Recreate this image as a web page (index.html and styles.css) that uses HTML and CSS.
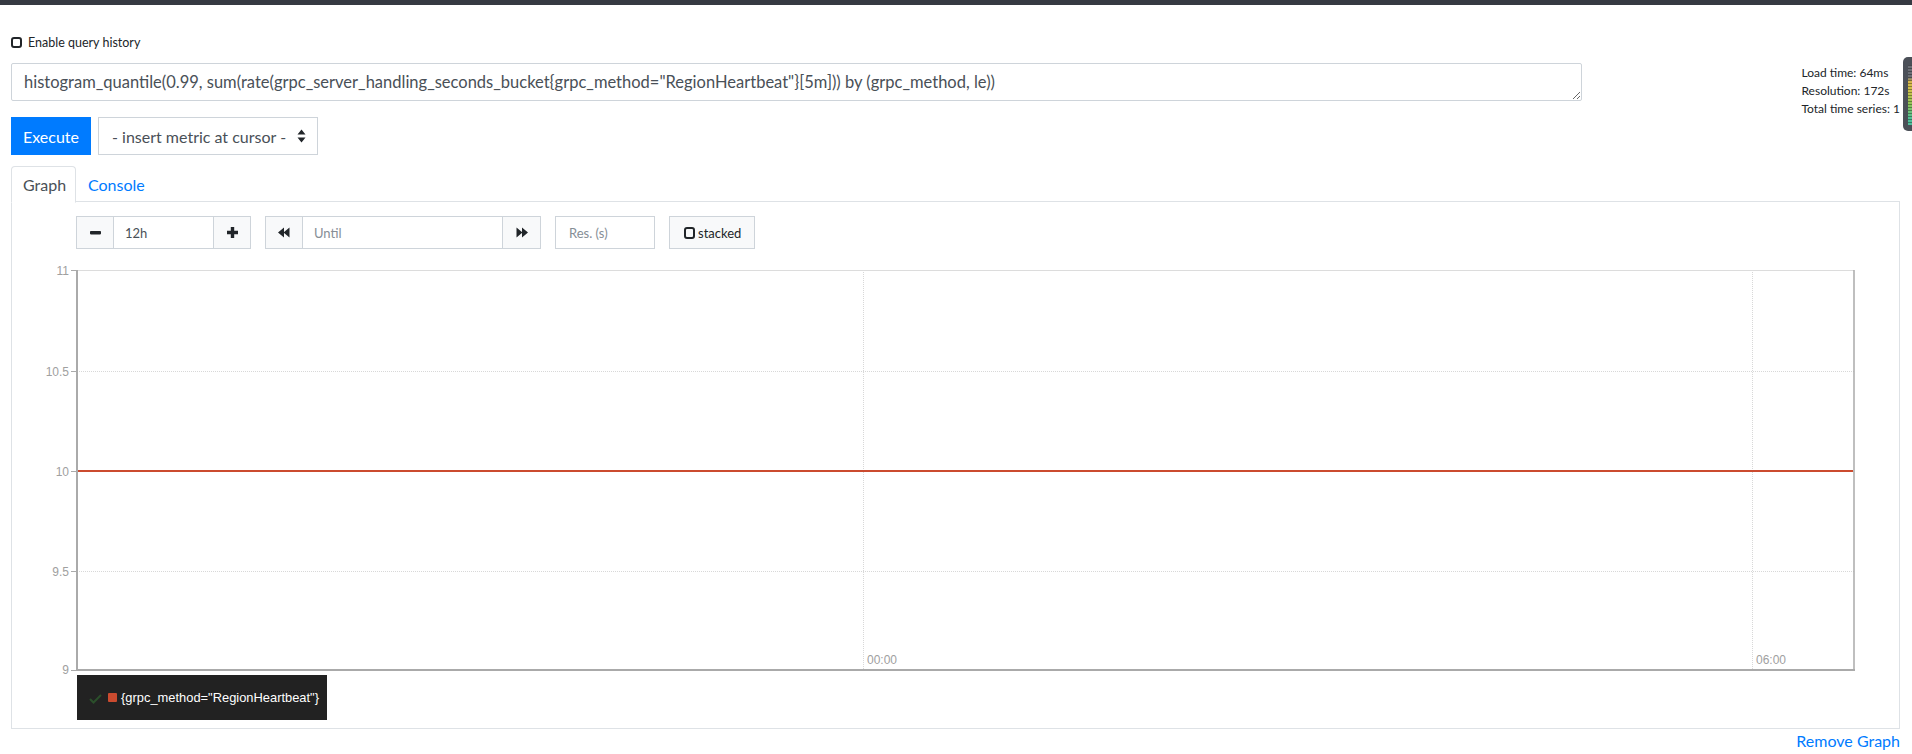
FILE: index.html
```html
<!DOCTYPE html>
<html>
<head>
<meta charset="utf-8">
<link rel="stylesheet" href="styles.css">
</head>
<body>
<div class="topbar"></div>
<div class="page">
  <div class="history-row">
    <span class="checkbox"></span>
    <span class="history-label">Enable query history</span>
  </div>
  <div class="query-row">
    <textarea class="query-input" spellcheck="false">histogram_quantile(0.99, sum(rate(grpc_server_handling_seconds_bucket{grpc_method="RegionHeartbeat"}[5m])) by (grpc_method, le))</textarea>
    <div class="stats">
      <div>Load time: 64ms</div>
      <div>Resolution: 172s</div>
      <div>Total time series: 1</div>
    </div>
  </div>
  <div class="exec-row">
    <button class="btn-execute">Execute</button>
    <div class="metric-select">
      <span>- insert metric at cursor -</span>
      <svg class="sort-icon" width="9" height="14" viewBox="0 0 9 14"><path d="M4.5 0.5 L8.5 5.5 L0.5 5.5 Z M4.5 13.5 L8.5 8.5 L0.5 8.5 Z" fill="#212529"/></svg>
    </div>
  </div>
  <div class="tabs">
    <div class="tab active">Graph</div>
    <div class="tab">Console</div>
  </div>
  <div class="panel">
    <div class="controls">
      <div class="group">
        <div class="gbtn">
          <svg width="11" height="11" viewBox="0 0 11 11"><rect x="0" y="4" width="11" height="3.4" rx="0.8" fill="#212529"/></svg>
        </div>
        <div class="ginput range">12h</div>
        <div class="gbtn">
          <svg width="11" height="11" viewBox="0 0 11 11"><path d="M3.8 0 H7.2 V3.8 H11 V7.2 H7.2 V11 H3.8 V7.2 H0 V3.8 H3.8 Z" fill="#212529"/></svg>
        </div>
      </div>
      <div class="group">
        <div class="gbtn">
          <svg width="12" height="11" viewBox="0 0 12 11"><path d="M0 5.5 L6 0.5 V10.5 Z M5.5 5.5 L11.5 0.5 V10.5 Z" fill="#212529"/></svg>
        </div>
        <div class="ginput until placeholder">Until</div>
        <div class="gbtn fwd">
          <svg width="12" height="11" viewBox="0 0 12 11"><path d="M0.5 0.5 L6.5 5.5 L0.5 10.5 Z M6 0.5 L12 5.5 L6 10.5 Z" fill="#212529"/></svg>
        </div>
      </div>
      <div class="ginput res placeholder">Res. (s)</div>
      <div class="stacked"><span class="checkbox small"></span>stacked</div>
    </div>
    <svg class="chart" width="1835" height="411" viewBox="0 0 1835 411">
      <g stroke="#d8d8d8" stroke-width="1" stroke-dasharray="1 1">
        <line x1="50" y1="107.5" x2="1827" y2="107.5"/>
        <line x1="50" y1="207.5" x2="1827" y2="207.5"/>
        <line x1="50" y1="307.5" x2="1827" y2="307.5"/>
        <line x1="836.5" y1="6" x2="836.5" y2="406"/>
        <line x1="1725.5" y1="6" x2="1725.5" y2="406"/>
      </g>
      <line x1="50" y1="6.5" x2="1827" y2="6.5" stroke="#dcdcdc" stroke-width="1"/>
      <line x1="1827" y1="6" x2="1827" y2="407" stroke="#aaaaaa" stroke-width="1.5"/>
      <line x1="50" y1="406" x2="1828" y2="406" stroke="#aaaaaa" stroke-width="2"/>
      <line x1="50" y1="6" x2="50" y2="407" stroke="#aaaaaa" stroke-width="2"/>
      <g stroke="#aaaaaa" stroke-width="1">
        <line x1="44" y1="6.5" x2="50" y2="6.5"/>
        <line x1="44" y1="107.5" x2="50" y2="107.5"/>
        <line x1="44" y1="207.5" x2="50" y2="207.5"/>
        <line x1="44" y1="307.5" x2="50" y2="307.5"/>
        <line x1="44" y1="406.5" x2="50" y2="406.5"/>
      </g>
      <line x1="51" y1="207" x2="1826" y2="207" stroke="#cb4b2f" stroke-width="2"/>
      <g class="ylabels" text-anchor="end">
        <text x="42" y="10.5">11</text>
        <text x="42" y="111.5">10.5</text>
        <text x="42" y="211.5">10</text>
        <text x="42" y="311.5">9.5</text>
        <text x="42" y="410">9</text>
      </g>
      <g class="xlabels">
        <text x="840" y="400">00:00</text>
        <text x="1729" y="400">06:00</text>
      </g>
    </svg>
    <div class="legend">
      <svg class="legend-check" width="13" height="10" viewBox="0 0 13 10"><path d="M1 5 L4.5 8.5 L12 1" fill="none" stroke="#2b4f2b" stroke-width="2"/></svg>
      <span class="swatch"></span>
      <span class="legend-text">{grpc_method="RegionHeartbeat"}</span>
    </div>
  </div>
  <div class="remove-row"><a class="remove-link">Remove Graph</a></div>
</div>
<div class="gadget"><div class="gadget-bars"></div></div>
</body>
</html>
```
FILE: styles.css
```css
html, body {
  margin: 0;
  padding: 0;
  background: #ffffff;
  font-family: Lato, "Liberation Sans", sans-serif;
  color: #212529;
  overflow: hidden;
}
.topbar {
  height: 5px;
  background: #363a42;
}
.page {
  padding: 0 12px 0 11px;
}
.history-row {
  display: flex;
  align-items: center;
  height: 14px;
  margin-top: 30px;
}
.checkbox {
  display: inline-block;
  width: 7px;
  height: 7px;
  border: 2px solid #212529;
  border-radius: 3px;
  margin-right: 6px;
}
.history-label {
  font-size: 12.5px;
  color: #212529;
}
.query-row {
  display: flex;
  align-items: flex-start;
  height: 38px;
  margin-top: 14px;
}
.query-input {
  width: 1573px;
  height: 38px;
  box-sizing: border-box;
  border: 1px solid #ced4da;
  border-radius: 2px;
  padding: 6px 12px;
  font-family: Lato, "Liberation Sans", sans-serif;
  font-size: 16.5px;
  line-height: 24px;
  color: #495057;
  resize: vertical;
  overflow: hidden;
  white-space: nowrap;
  margin: 0;
}
.stats {
  margin-left: 219px;
  margin-top: 1px;
  font-size: 12px;
  line-height: 18px;
  color: #212529;
  white-space: nowrap;
}
.exec-row {
  display: flex;
  margin-top: 16px;
  gap: 7px;
}
.btn-execute {
  width: 80px;
  height: 38px;
  background: #007bff;
  color: #ffffff;
  border: 0;
  font-family: Lato, "Liberation Sans", sans-serif;
  font-size: 16px;
  padding: 0;
  margin: 0;
}
.metric-select {
  width: 220px;
  height: 38px;
  box-sizing: border-box;
  border: 1px solid #ced4da;
  display: flex;
  align-items: center;
  padding-left: 13px;
  font-size: 16px;
  color: #495057;
}
.sort-icon {
  margin-left: 11px;
}
.tabs {
  display: flex;
  margin-top: 11px;
  height: 36px;
  position: relative;
  z-index: 1;
}
.tab {
  height: 36px;
  box-sizing: border-box;
  padding: 0 11px 0 11px;
  display: flex;
  align-items: center;
  font-size: 16px;
  color: #007bff;
  border: 1px solid transparent;
  border-radius: 4px 4px 0 0;
}
.tab.active {
  color: #495057;
  border-color: #dee2e6 #dee2e6 #ffffff;
  background: #ffffff;
  height: 37px;
  width: 65px;
}
.panel {
  border: 1px solid #dee2e6;
  margin-top: -1px;
  height: 528px;
  box-sizing: border-box;
  padding: 14px 0 0 15px;
}
.controls {
  display: flex;
  margin-left: 49px;
  height: 33px;
  gap: 14px;
}
.group {
  display: flex;
}
.gbtn {
  width: 38px;
  height: 33px;
  box-sizing: border-box;
  border: 1px solid #ced4da;
  background: #f8f9fa;
  display: flex;
  align-items: center;
  justify-content: center;
}
.gbtn.fwd {
  width: 39px;
}
.ginput {
  height: 33px;
  box-sizing: border-box;
  border: 1px solid #ced4da;
  border-left: 0;
  border-right: 0;
  display: flex;
  align-items: center;
  padding-left: 11px;
  font-size: 13px;
  color: #495057;
}
.ginput.range { width: 99px; }
.ginput.until { width: 199px; }
.ginput.res {
  width: 100px;
  border: 1px solid #ced4da;
  padding-left: 13px;
}
.placeholder { color: #868e96; }
.stacked {
  width: 86px;
  height: 33px;
  box-sizing: border-box;
  border: 1px solid #ced4da;
  background: #f8f9fa;
  display: flex;
  align-items: center;
  padding-left: 14px;
  font-size: 13px;
  color: #212529;
}
.checkbox.small {
  width: 7px;
  height: 8px;
  margin-right: 3px;
}
.chart {
  display: block;
  margin-top: 15px;
  overflow: visible;
}
.chart text {
  font-family: "Liberation Sans", Arial, sans-serif;
  font-size: 12px;
  fill: #a0a0a0;
}
.legend {
  margin-left: 50px;
  margin-top: 0;
  width: 250px;
  height: 45px;
  background: #222222;
  display: flex;
  align-items: center;
  padding-left: 12px;
  box-sizing: border-box;
}
.legend-check {
  margin-right: 6px;
  margin-top: 2px;
}
.swatch {
  width: 9px;
  height: 9px;
  background: #cb4b2f;
  border-radius: 1px;
  margin-right: 4px;
}
.legend-text {
  font-family: "Liberation Sans", Arial, sans-serif;
  font-size: 12.9px;
  color: #ffffff;
}
.remove-row {
  display: flex;
  justify-content: flex-end;
  margin-top: 2px;
}
.remove-link {
  font-size: 16px;
  color: #007bff;
  line-height: 20px;
}
.gadget {
  position: absolute;
  left: 1903px;
  top: 57px;
  width: 12px;
  height: 74px;
  background: #4b5058;
  border-radius: 5px 0 0 5px;
}
.gadget-bars {
  position: absolute;
  left: 5px;
  top: 8px;
  width: 7px;
  height: 60px;
  background:
    repeating-linear-gradient(to bottom, rgba(0,0,0,0.35) 0 1px, transparent 1px 3px),
    linear-gradient(to bottom, #6b6f76 0%, #6b6f76 20%, #d9b84a 28%, #c9c24c 45%, #8ec457 65%, #4fbf9a 90%);
}
```
